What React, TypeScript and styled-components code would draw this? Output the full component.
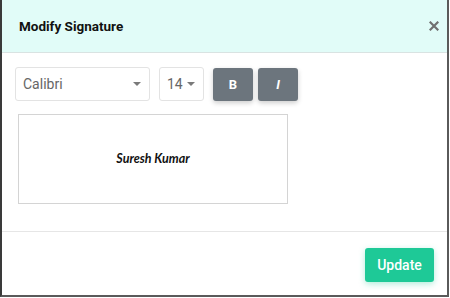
import React from "react";
import styled, { createGlobalStyle } from "styled-components";

const Global = createGlobalStyle`
  html, body { margin: 0; padding: 0; background: #fff; }
  body { font-family: Roboto, "Liberation Sans", Arial, sans-serif; }
  * { box-sizing: border-box; }
`;

const Modal = styled.div`
  width: 449px;
  height: 297px;
  background: #fff;
  border-left: 2px solid #3a3a3a;
  border-right: 2px solid #5a5a5a;
  border-bottom: 2px solid #5a5a5a;
  display: flex;
  flex-direction: column;
`;

const Header = styled.div`
  height: 53px;
  background: #e1fcf8;
  border-bottom: 1px solid #d9e3e2;
  display: flex;
  align-items: center;
  justify-content: space-between;
  padding: 0 6px 0 17px;
`;

const Title = styled.h5`
  margin: 0;
  font-size: 13.5px;
  font-weight: 700;
  color: #111;
  font-family: Roboto, "Liberation Sans", Arial, sans-serif;
`;

const Close = styled.button`
  border: none;
  background: none;
  padding: 0;
  width: 14px;
  height: 14px;
  display: flex;
  align-items: center;
  justify-content: center;
  cursor: pointer;
`;

const Body = styled.div`
  flex: 1;
  padding: 14px 13px 0 13px;
  border-bottom: 1px solid #e6e6e6;
`;

const Toolbar = styled.div`
  display: flex;
  align-items: center;
  gap: 9px;
`;

const Select = styled.div<{ $w: number }>`
  width: ${(p) => p.$w}px;
  height: 34px;
  border: 1px solid #e3e3e3;
  border-radius: 3px;
  display: flex;
  align-items: center;
  justify-content: space-between;
  padding: 0 8px 0 7px;
  font-size: 14px;
  color: #666;
`;

const Caret = styled.span`
  width: 0;
  height: 0;
  border-left: 4.5px solid transparent;
  border-right: 4.5px solid transparent;
  border-top: 4.5px solid #7a7a7a;
`;

const StyleButtons = styled.div`
  display: flex;
  gap: 5px;
`;

const StyleBtn = styled.button<{ $italic?: boolean }>`
  width: 40px;
  height: 33px;
  border: none;
  border-radius: 3px;
  background: #6c757d;
  color: #fff;
  font-family: Roboto, "Liberation Sans", Arial, sans-serif;
  font-size: 13px;
  font-weight: 700;
  font-style: ${(p) => (p.$italic ? "italic" : "normal")};
  box-shadow: 0 2px 5px rgba(0, 0, 0, 0.2);
`;

const SignatureBox = styled.div`
  margin: 13px 0 0 3px;
  width: 270px;
  height: 90px;
  border: 1px solid #d4d4d4;
  display: flex;
  align-items: center;
  justify-content: center;
`;

const SignatureText = styled.span`
  font-family: Lato, "Open Sans", sans-serif;
  font-weight: 700;
  font-style: italic;
  font-size: 12.5px;
  color: #111;
  margin-top: -2px;
`;

const Footer = styled.div`
  height: 63px;
  display: flex;
  align-items: center;
  justify-content: flex-end;
  padding: 2px 13px 0 0;
`;

const Primary = styled.button`
  width: 69px;
  height: 34px;
  border: none;
  border-radius: 3px;
  background: #1ec997;
  color: #fff;
  font-family: Roboto, "Liberation Sans", Arial, sans-serif;
  font-size: 14px;
  font-weight: 500;
  box-shadow: 0 2px 6px rgba(30, 201, 151, 0.35);
`;

export default function App() {
  return (
    <>
      <Global />
      <Modal>
        <Header>
          <Title>Modify Signature</Title>
          <Close aria-label="close">
            <svg width="10" height="10" viewBox="0 0 10 10">
              <path d="M1.5 1.5L8.5 8.5M8.5 1.5L1.5 8.5" stroke="#707070" strokeWidth="2.2" strokeLinecap="square" />
            </svg>
          </Close>
        </Header>
        <Body>
          <Toolbar>
            <Select $w={135}>
              Calibri <Caret />
            </Select>
            <Select $w={45}>
              14 <Caret />
            </Select>
            <StyleButtons>
              <StyleBtn>B</StyleBtn>
              <StyleBtn $italic>I</StyleBtn>
            </StyleButtons>
          </Toolbar>
          <SignatureBox>
            <SignatureText>Suresh Kumar</SignatureText>
          </SignatureBox>
        </Body>
        <Footer>
          <Primary>Update</Primary>
        </Footer>
      </Modal>
    </>
  );
}
